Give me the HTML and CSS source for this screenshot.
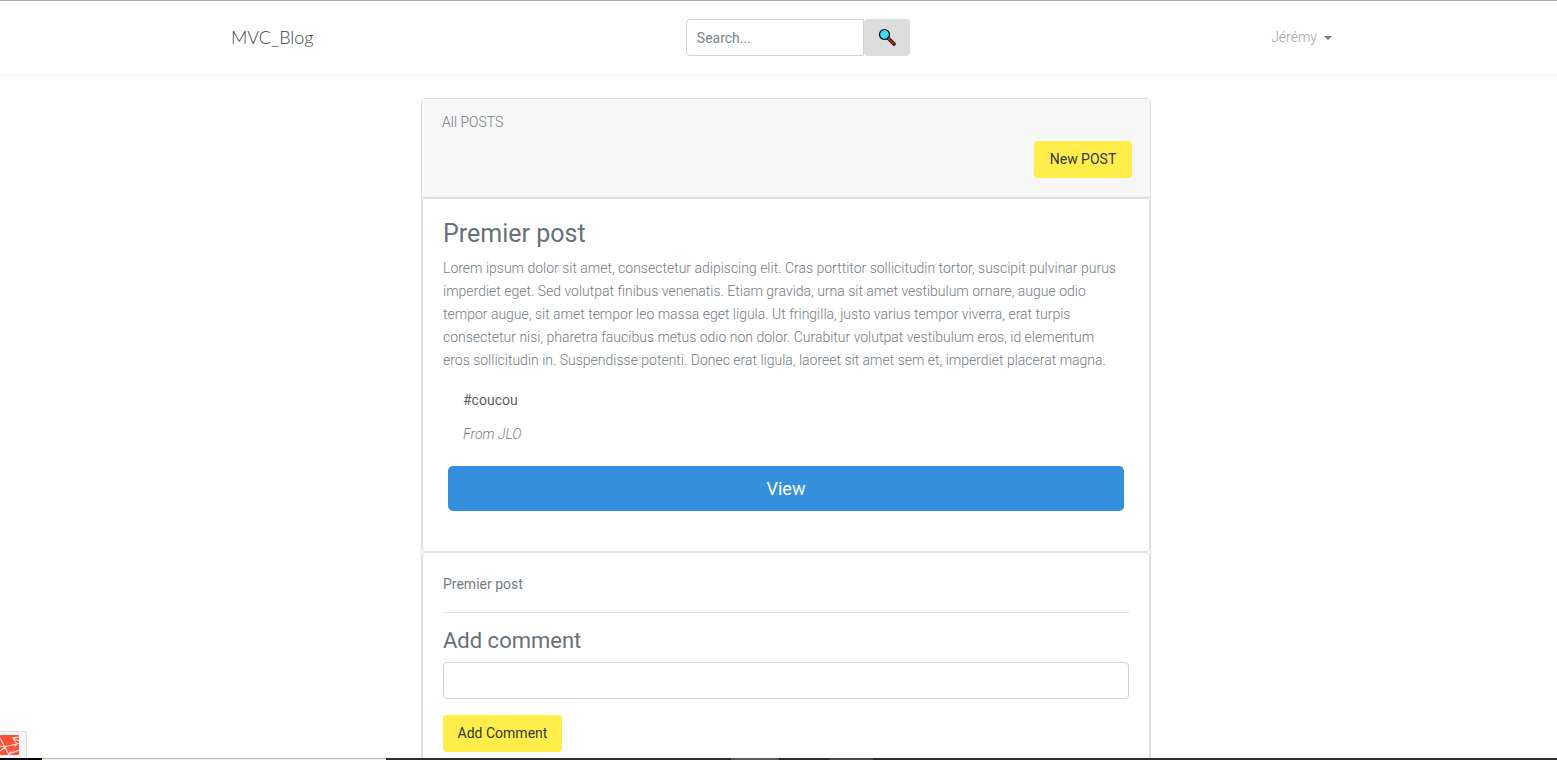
FILE: index.html
```html
<!DOCTYPE html>
<html lang="fr">
<head>
<meta charset="utf-8">
<title>MVC_Blog</title>
<link rel="stylesheet" href="styles.css">
</head>
<body>
<header class="navbar">
  <div class="container navbar-inner">
    <a class="brand" href="#">MVC_Blog</a>
    <form class="search">
      <input class="form-control search-input" type="search" placeholder="Search..." aria-label="Search">
      <button class="search-button" type="submit" aria-label="Search">
        <svg width="18" height="20" viewBox="0 0 18 20" aria-hidden="true">
          <path d="M10 10l6 6" stroke="#111" stroke-width="3.600" stroke-linecap="round"/>
          <path d="M9.500 9.500l2 2" stroke="#999" stroke-width="1.500"/>
          <path d="M12 12l3.800 3.800" stroke="#d8101c" stroke-width="2" stroke-linecap="round"/>
          <circle cx="6.500" cy="6.500" r="5" fill="#35d3f5" stroke="#111" stroke-width="1.200"/>
          <path d="M3.500 7.500l4-4M5 9l4.500-4.500" stroke="#7be8ff" stroke-width="1"/>
        </svg>
      </button>
    </form>
    <a class="user-menu" href="#">Jérémy <span class="caret"></span></a>
  </div>
</header>
<main class="container main">
  <section class="card posts">
    <div class="card-header">
      <span>All POSTS</span>
      <button class="btn btn-yellow new-post" type="button">New POST</button>
    </div>
    <article class="card card-body post">
      <h2 class="post-title">Premier post</h2>
      <p class="post-text">Lorem ipsum dolor sit amet, consectetur adipiscing elit. Cras porttitor sollicitudin tortor, suscipit pulvinar purus<br>
        imperdiet eget. Sed volutpat finibus venenatis. Etiam gravida, urna sit amet vestibulum ornare, augue odio<br>
        tempor augue, sit amet tempor leo massa eget ligula. Ut fringilla, justo varius tempor viverra, erat turpis<br>
        consectetur nisi, pharetra faucibus metus odio non dolor. Curabitur volutpat vestibulum eros, id elementum<br>
        eros sollicitudin in. Suspendisse potenti. Donec erat ligula, laoreet sit amet sem et, imperdiet placerat magna.</p>
      <a class="tag" href="#">#coucou</a>
      <em class="author">From JLO</em>
      <a class="btn btn-view" href="#">View</a>
    </article>
    <div class="card card-body comments">
      <p class="comment">Premier post</p>
      <hr class="rule">
      <form class="comment-form">
        <label class="comment-label" for="comment">Add comment</label>
        <input class="form-control" id="comment" type="text">
        <button class="btn btn-yellow add-comment" type="submit">Add Comment</button>
      </form>
    </div>
  </section>
</main>
<button class="debugbar" type="button" aria-label="Debug bar">
  <svg width="19" height="20" viewBox="0 0 19 20" aria-hidden="true">
    <rect width="19" height="20" rx="1" fill="#ff5035"/>
    <path d="M0 3L9 20M0 16L6 11.500L19 8.500M0 11L6 12M19 2L13 3L17 9M17 9L9 19L19 15M13 3L19 6" fill="none" stroke="#f6e4e0" stroke-width="1.200"/>
    <path d="M10.500 12.500L16 11L11 17z" fill="#ff5035"/>
  </svg>
</button>
<div class="taskbar"><span class="task-start"></span><span class="task-search"></span><span class="task-apps"></span><span class="task-active"></span><span class="task-gap"></span><span class="task-open"></span></div>
</body>
</html>
```
FILE: styles.css
```css
* { box-sizing: border-box; }
html { overflow: hidden; }
body {
  margin: 0;
  background: #fff;
  color: #747b82;
  font-family: Roboto, "Open Sans", sans-serif;
  font-size: 14px;
  font-weight: 300;
  line-height: 23px;
}
a { color: inherit; text-decoration: none; }
.container { width: 100%; max-width: 1140px; margin: 0 auto; padding: 0 15px; }
.navbar {
  padding: 18px 0 18px 15px;
  border-top: 1px solid #aaa;
  box-shadow: 0 2px 4px rgba(0, 0, 0, .04);
}
.navbar-inner { display: flex; align-items: center; justify-content: space-between; }
.brand { margin-right: 20px; color: #444; font-family: Lato, sans-serif; font-size: 18px; }
.search { display: flex; }
.form-control {
  width: 100%;
  height: 37px;
  padding: 6px 10px;
  border: 1px solid #ced4da;
  border-radius: 4px;
  background: #fff;
  color: #495057;
  font: inherit;
  font-weight: 400;
}
.form-control::placeholder { color: #7b848c; opacity: 1; }
.search-input { width: 178px; border-radius: 4px 0 0 4px; }
.search-button {
  display: flex;
  align-items: center;
  justify-content: center;
  width: 46px;
  padding: 0;
  border: 0;
  border-radius: 4px;
  background: #ddd;
}
.user-menu { display: flex; align-items: center; gap: 7px; padding: 0 9px; color: #a0a0a0; }
.caret { border: 4px solid transparent; border-top-color: #777; border-bottom: 0; }
.main { padding: 24px 0 24px 15px; }
.card { border: 1px solid #dfdfdf; border-radius: 4px; background: #fff; }
.posts { max-width: 730px; margin: 0 auto; }
.card-header {
  display: flex;
  flex-direction: column;
  padding: 12px 18px 19px 20px;
  border-bottom: 1px solid #d8d8d8;
  background: #f7f7f7;
}
.btn {
  padding: 6px 12px;
  border: 1px solid transparent;
  border-radius: 4px;
  font: inherit;
  font-weight: 400;
  line-height: 23px;
  text-align: center;
}
.btn-yellow { background: #ffed4a; color: #33373b; white-space: nowrap; }
.new-post { align-self: flex-end; min-width: 98px; margin-top: 7px; }
.add-comment { min-width: 119px; }
.card-body { padding: 20px; }
.post { display: flex; flex-direction: column; padding-bottom: 40px; }
.post-title { margin: 0 0 9px; color: #687078; font-size: 25px; font-weight: 400; line-height: 29px; }
.post-text { margin: 0; white-space: nowrap; }
.tag { margin: 17px 20px 11px; color: #5a6167; font-weight: 400; }
.author { margin: 0 20px 20px; }
.btn-view {
  margin: 0 5px;
  padding: 8px 16px;
  border-radius: 5px;
  background: #3490dc;
  color: #fff;
  font-size: 18px;
  line-height: 27px;
}
.comment { margin: 0 0 16px; font-weight: 400; }
.rule { height: 1px; margin: 0 0 15px; border: 0; background: #e3e3e3; }
.comment-form { display: flex; flex-direction: column; align-items: flex-start; }
.comment-label { margin-bottom: 8px; color: #687078; font-size: 22px; font-weight: 400; line-height: 26px; }
.comment-form .form-control { margin-bottom: 16px; }
.debugbar {
  position: fixed;
  bottom: 2px;
  left: 0;
  display: flex;
  align-items: center;
  width: 27px;
  height: 27px;
  padding: 0;
  border: 1px solid #ddd;
  border-width: 1px 1px 0 0;
  background: #f5f5f5;
}
.taskbar { position: fixed; right: 0; bottom: 0; left: 0; display: flex; height: 2px; background: #2e2c2e; }
.task-start { width: 42px; background: #050510; }
.task-search { width: 344px; border-top: 1px solid #bbb; background: #eee; }
.task-apps { width: 345px; }
.task-active { width: 48px; background: #5b595b; }
.task-gap { width: 50px; }
.task-open { width: 44px; background: #474547; }
```
